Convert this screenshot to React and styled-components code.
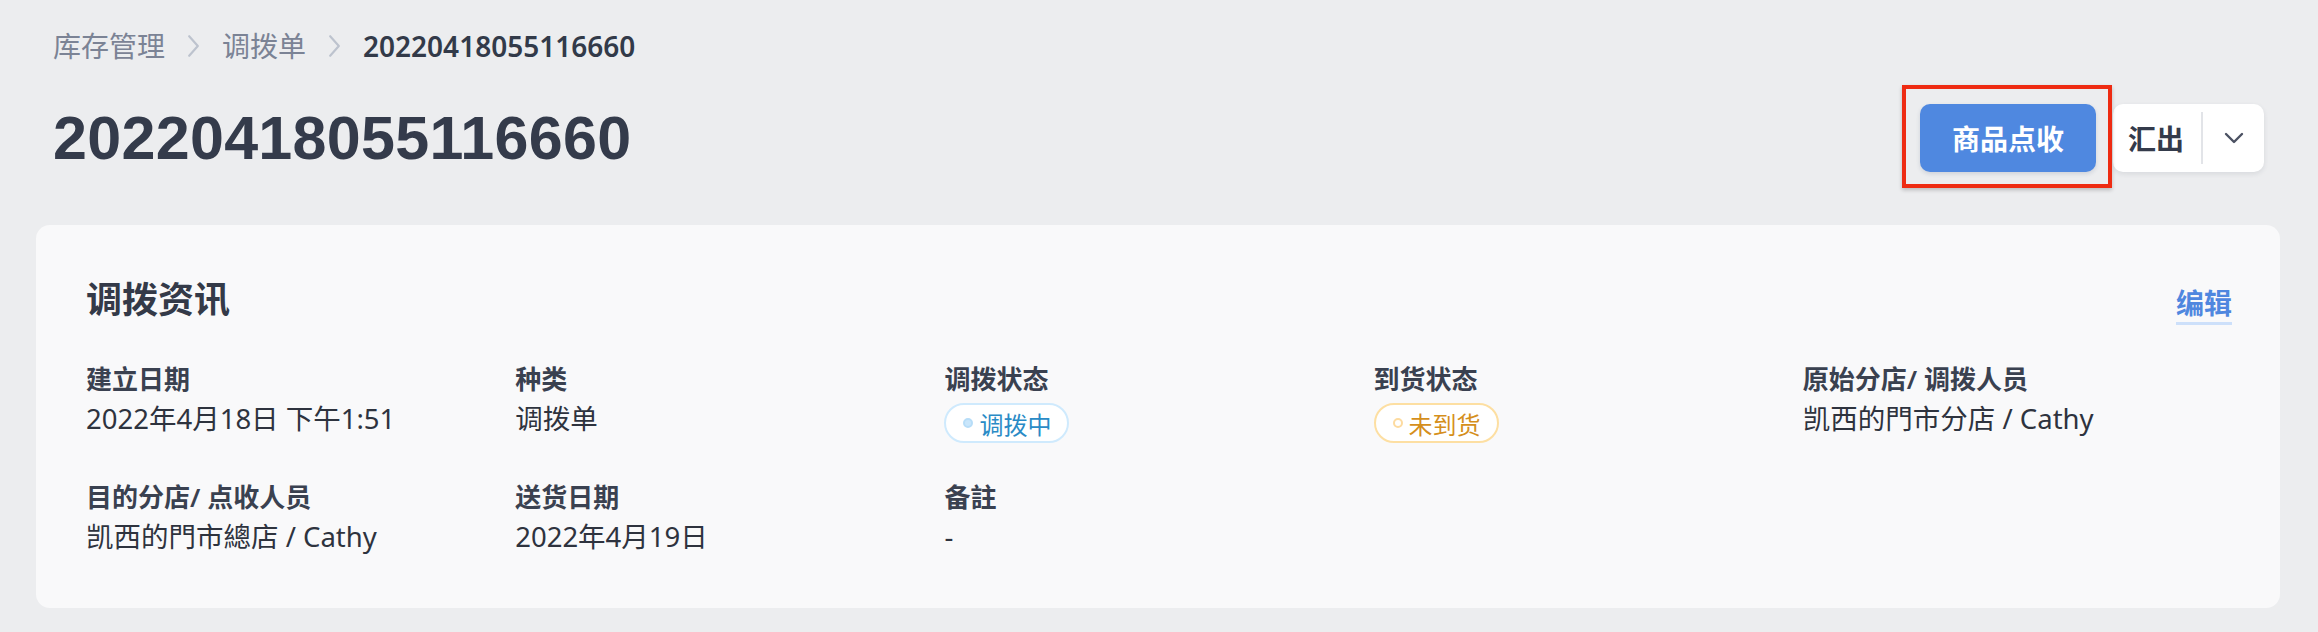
import React from 'react';
import styled, { createGlobalStyle } from 'styled-components';

const GlobalStyle = createGlobalStyle`
  body {
    margin: 0;
    background: #ecedef;
    font-family: 'Noto Sans', 'Noto Sans CJK SC', sans-serif;
    color: #343a48;
  }
`;

const Page = styled.div`
  padding-top: 26px;
  padding-bottom: 24px;
`;

const Header = styled.div`
  padding: 0 54px 0 53px;
`;

const Breadcrumb = styled.nav`
  display: flex;
  align-items: center;
  height: 40px;
  font-size: 28px;
  line-height: 40px;
`;

const Crumb = styled.span`
  color: ${p => (p.current ? '#323a49' : '#7b8395')};
  font-weight: ${p => (p.current ? 600 : 400)};
`;

const Sep = styled.span`
  display: flex;
  align-items: center;
  margin: 0 22px;
`;

const TitleRow = styled.div`
  display: flex;
  align-items: center;
  justify-content: space-between;
  height: 68px;
  margin-top: 38px;
`;

const Title = styled.h1`
  margin: 0;
  font-family: 'Liberation Sans', Arial, sans-serif;
  font-size: 61px;
  letter-spacing: 0.3px;
  line-height: 68px;
  font-weight: 700;
  color: #343b4b;
`;

const Actions = styled.div`
  display: flex;
  align-items: center;
  gap: 17px;
`;

const Highlight = styled.div`
  position: relative;
  display: flex;
`;

const RedBox = styled.span`
  position: absolute;
  left: -18px;
  right: -16px;
  top: -19px;
  bottom: -16px;
  border: 4px solid #ee2b12;
  box-shadow: 0 2px 4px rgba(0, 0, 0, 0.22);
  pointer-events: none;
`;

const PrimaryButton = styled.button`
  height: 68px;
  width: 176px;
  border: none;
  border-radius: 10px;
  background: #4f88e0;
  color: #fff;
  font-family: inherit;
  font-size: 28px;
  font-weight: 700;
  box-shadow: 0 2px 4px rgba(40, 60, 100, 0.15);
  cursor: pointer;
`;

const SplitButton = styled.div`
  display: flex;
  align-items: center;
  height: 68px;
  width: 151px;
  background: #fff;
  border-radius: 10px;
  box-shadow: 0 2px 5px rgba(40, 50, 70, 0.1);
  box-sizing: border-box;
`;

const SplitLabel = styled.span`
  padding: 0 17px 0 15px;
  font-size: 28px;
  font-weight: 600;
  color: #343b4b;
`;

const SplitToggle = styled.span`
  flex: 1;
  display: flex;
  align-items: center;
  justify-content: center;
  height: 52px;
  border-left: 2px solid #e2e4e8;
`;

const Card = styled.section`
  margin: 53px 38px 0 36px;
  padding: 50px 48px 51px 50px;
  background: #f9f9fa;
  border-radius: 14px;
`;

const CardHead = styled.div`
  display: flex;
  align-items: center;
  justify-content: space-between;
  height: 50px;
`;

const CardTitle = styled.h2`
  margin: 0;
  font-size: 36px;
  line-height: 50px;
  font-weight: 700;
  color: #343a48;
`;

const EditLink = styled.a`
  display: inline-block;
  margin-top: 10px;
  font-size: 28px;
  line-height: 36px;
  font-weight: 700;
  color: #4f87df;
  padding-bottom: 1px;
  border-bottom: 3px solid #cde0fa;
  text-decoration: none;
  cursor: pointer;
`;

const InfoGrid = styled.div`
  display: grid;
  grid-template-columns: repeat(5, 1fr);
  row-gap: 34px;
  margin-top: 34px;
`;

const Field = styled.div`
  display: flex;
  flex-direction: column;
  align-items: flex-start;
`;

const Label = styled.div`
  font-size: 26px;
  line-height: 40px;
  font-weight: 600;
  color: #3a4150;
`;

const Value = styled.div`
  font-size: 27.5px;
  line-height: 40px;
  color: #2e333e;
`;

const Badge = styled.span`
  display: inline-flex;
  align-items: center;
  gap: 6px;
  height: 40px;
  box-sizing: border-box;
  margin-top: 4px;
  padding: 0 16px 0 17px;
  border: 2px solid ${p => p.border};
  border-radius: 20px;
  background: #fff;
  color: ${p => p.color};
  font-size: 24px;
`;

const Dot = styled.span`
  width: 10px;
  height: 10px;
  border-radius: 50%;
  box-sizing: border-box;
  border: 2px solid ${p => p.ring};
  background: ${p => p.fill};
`;

const Chevron = ({ color, w, h, sw, dir }) => (
  <svg width={w} height={h} viewBox={dir === 'down' ? '0 0 20 12' : '0 0 12 22'} fill="none">
    {dir === 'down' ? (
      <polyline points="2,2 10,10 18,2" stroke={color} strokeWidth={sw} strokeLinecap="round" strokeLinejoin="round" />
    ) : (
      <polyline points="2,2 10,11 2,20" stroke={color} strokeWidth={sw} strokeLinecap="round" strokeLinejoin="round" />
    )}
  </svg>
);

const statusStyles = {
  blue: { color: '#2a8bc6', border: '#cfeafd', fill: '#c9e6fb', ring: '#b7ddf8' },
  orange: { color: '#d58f1c', border: '#fddfa2', fill: '#fff', ring: '#fddba0' }
};

const StatusBadge = ({ tone, children }) => {
  const s = statusStyles[tone];
  return (
    <Badge color={s.color} border={s.border}>
      <Dot fill={s.fill} ring={s.ring} />
      {children}
    </Badge>
  );
};

const fields = [
  { label: '建立日期', value: '2022年4月18日 下午1:51' },
  { label: '种类', value: '调拨单' },
  { label: '调拨状态', badge: { tone: 'blue', text: '调拨中' } },
  { label: '到货状态', badge: { tone: 'orange', text: '未到货' } },
  { label: '原始分店/ 调拨人员', value: '凯西的門市分店 / Cathy' },
  { label: '目的分店/ 点收人员', value: '凯西的門市總店 / Cathy' },
  { label: '送货日期', value: '2022年4月19日' },
  { label: '备註', value: '-' }
];

const App = () => {
  return (
    <Page>
      <GlobalStyle />
      <Header>
        <Breadcrumb>
          <Crumb>库存管理</Crumb>
          <Sep>
            <Chevron color="#bdc3ce" w={13} h={24} sw={2} />
          </Sep>
          <Crumb>调拨单</Crumb>
          <Sep>
            <Chevron color="#bdc3ce" w={13} h={24} sw={2} />
          </Sep>
          <Crumb current>20220418055116660</Crumb>
        </Breadcrumb>
        <TitleRow>
          <Title>20220418055116660</Title>
          <Actions>
            <Highlight>
              <PrimaryButton>商品点收</PrimaryButton>
              <RedBox />
            </Highlight>
            <SplitButton>
              <SplitLabel>汇出</SplitLabel>
              <SplitToggle>
                <Chevron dir="down" color="#4b5162" w={20} h={12} sw={2.4} />
              </SplitToggle>
            </SplitButton>
          </Actions>
        </TitleRow>
      </Header>

      <Card>
        <CardHead>
          <CardTitle>调拨资讯</CardTitle>
          <EditLink>编辑</EditLink>
        </CardHead>
        <InfoGrid>
          {fields.map(f => (
            <Field key={f.label}>
              <Label>{f.label}</Label>
              {f.badge ? (
                <StatusBadge tone={f.badge.tone}>{f.badge.text}</StatusBadge>
              ) : (
                <Value>{f.value}</Value>
              )}
            </Field>
          ))}
        </InfoGrid>
      </Card>
    </Page>
  );
};

export default App;
